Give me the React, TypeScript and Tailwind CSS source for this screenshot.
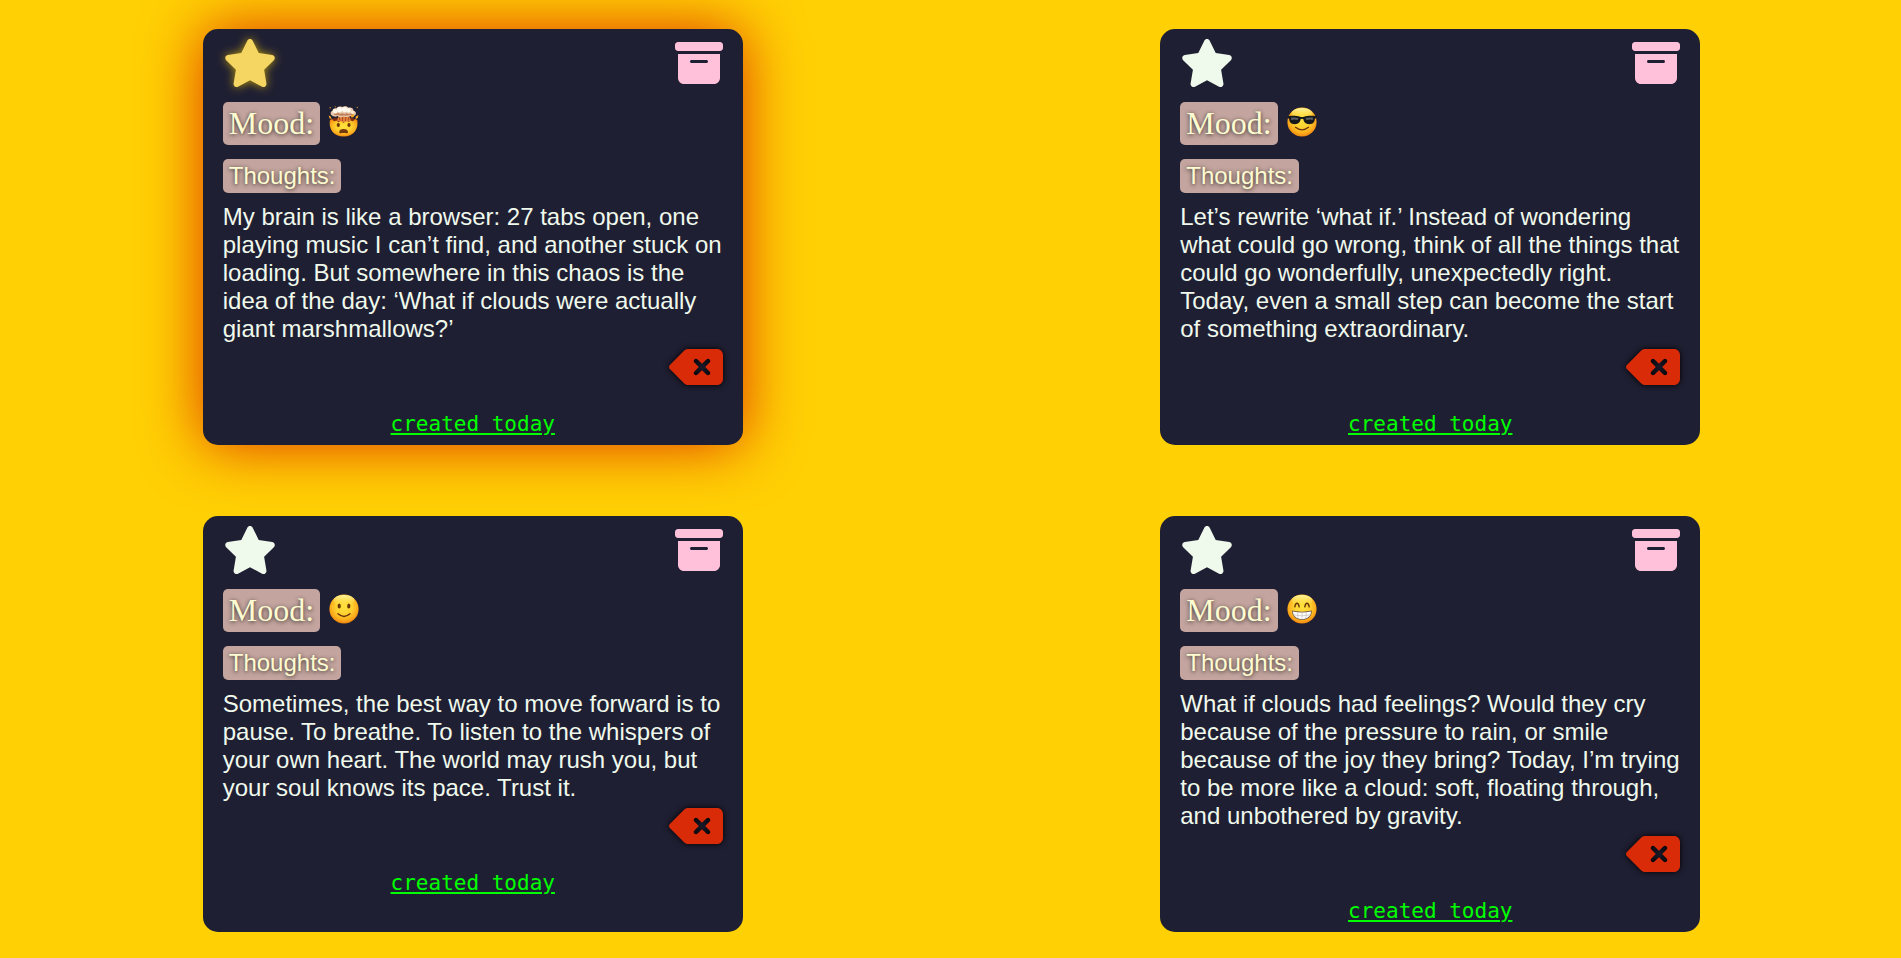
import { useId } from "react";
import { FaBoxArchive, FaDeleteLeft, FaStar } from "react-icons/fa6";

type MoodName = "exploding head" | "sunglasses" | "slight smile" | "beaming";

interface Note {
  id: number;
  mood: MoodName;
  text: string;
  starred: boolean;
}

const notes: Note[] = [
  {
    id: 1,
    mood: "exploding head",
    starred: true,
    text: "My brain is like a browser: 27 tabs open, one playing music I can’t find, and another stuck on loading. But somewhere in this chaos is the idea of the day: ‘What if clouds were actually giant marshmallows?’",
  },
  {
    id: 2,
    mood: "sunglasses",
    starred: false,
    text: "Let’s rewrite ‘what if.’ Instead of wondering what could go wrong, think of all the things that could go wonderfully, unexpectedly right. Today, even a small step can become the start of something extraordinary.",
  },
  {
    id: 3,
    mood: "slight smile",
    starred: false,
    text: "Sometimes, the best way to move forward is to pause. To breathe. To listen to the whispers of your own heart. The world may rush you, but your soul knows its pace. Trust it.",
  },
  {
    id: 4,
    mood: "beaming",
    starred: false,
    text: "What if clouds had feelings? Would they cry because of the pressure to rain, or smile because of the joy they bring? Today, I’m trying to be more like a cloud: soft, floating through, and unbothered by gravity.",
  },
];

function ExplodingFace({ fill }: { fill: string }) {
  return (
    <>
      <path d="M3 14.500 L6 12 H25 L28.500 14.500 L26 17 H5Z" fill="#7d2a10" />
      <path d="M9 14.500 L11 9 H21 L23 14.500 L20 16 H12Z" fill="#e0823c" />
      <path d="M11 10 L12 14.500 M14.500 10 V15 M18 10 L17.500 15 M21 10 L20.500 14.500" stroke="#a9401a" strokeWidth="0.900" />
      <path
        d="M1.900 14 L4.200 13 L6 15.200 L8.500 14.400 L10.500 16.300 L13 15.300 L15.500 16.800 L18 15.300 L20.500 16.300 L22.500 14.400 L25 15.200 L27 13 L29.300 14 C30.800 23 25.500 30.600 15.600 30.600 C5.700 30.600 .4 23 1.900 14Z"
        fill={fill}
      />
      <path d="M4 9.500 C2 8.500 2.200 5.500 4.400 5 C4.400 2.800 6.500 1.700 8.400 2.300 C9.800 .3 12.500 0 14.200 .9 C16.500 -.4 19.500 0 20.600 1.700 C23.200 1 25.500 2.500 25.400 4.700 C28 5 28.800 8 27 9.300 C25.500 10.800 23 10.500 21.800 9.900 C20 11.500 17.500 11.300 15.800 10.500 C14 11.700 11 11.500 9.700 10 C8 11 5.300 10.900 4 9.500Z" fill="#e9c9ab" />
      <path d="M5.500 8 Q6.500 6.500 8.200 7.800 Q10 6.200 12 8 Q14.500 6.300 16.500 8 Q19 6.300 21 8 Q23.500 6.500 26 8 Q25 9.800 22 9 Q19 10.500 16 9.300 Q12.500 10.500 10 9 Q7 9.800 5.500 8Z" fill="#bd7f5c" />
      <circle cx="7" cy="5.200" r="2.300" fill="#fff6ea" />
      <circle cx="11.500" cy="3.600" r="2.700" fill="#fffaf2" />
      <circle cx="16.600" cy="3.500" r="2.700" fill="#fff8ee" />
      <circle cx="20.600" cy="4.300" r="2.300" fill="#fff6ea" />
      <circle cx="24.500" cy="6.300" r="1.700" fill="#fbe9d6" />
      <path
        d="M1 2 L2.600 1 L3 2.600Z M28.300 1.200 L29.800 .7 L29.600 2.200Z M.6 9.500 L2.800 10.500 L3.600 13 L1.600 12.600Z M27.500 10.800 L30.300 9 L30 11.800 L27.800 13.200Z M22.800 9.500 L25.600 8 L26 10.800 L23.500 11.800Z M6.500 .6 L7.700 .2 L7.200 1.700Z"
        fill="#f6a428"
      />
      <ellipse cx="10.300" cy="19" rx="1.600" ry="2" fill="#6b3508" />
      <ellipse cx="21" cy="19" rx="1.600" ry="2" fill="#6b3508" />
      <path d="M11.200 26.200 C11.200 23.800 13 23 15.600 23 C18.200 23 20 23.800 20 26.200 C20 27.700 17.800 27 15.600 27 C13.400 27 11.200 27.700 11.200 26.200Z" fill="#74390c" />
    </>
  );
}

function MoodFace({ mood }: { mood: MoodName }) {
  const id = useId();
  const body = `${id}-body`;
  const shine = `${id}-shine`;
  const fill = `url(#${body})`;
  return (
    <svg viewBox="0 0 32 32" role="img" aria-label={mood} className="mt-1 size-8 shrink-0">
      <defs>
        <radialGradient id={body} cx="50%" cy="42%" r="58%">
          <stop offset="0" stopColor="#ffe23f" />
          <stop offset="0.5" stopColor="#ffcf2e" />
          <stop offset="0.8" stopColor="#fcac1c" />
          <stop offset="1" stopColor="#ee8410" />
        </radialGradient>
        <linearGradient id={shine} x1="0" y1="0" x2="0" y2="1">
          <stop offset="0" stopColor="#fffbb0" stopOpacity="0.95" />
          <stop offset="1" stopColor="#ffe23f" stopOpacity="0" />
        </linearGradient>
      </defs>
      {mood === "exploding head" ? (
        <ExplodingFace fill={fill} />
      ) : (
        <>
          <circle cx="16" cy="16" r="14.600" fill={fill} />
          <ellipse cx="16" cy="7.500" rx="10.500" ry="5.600" fill={`url(#${shine})`} />
        </>
      )}
      {mood === "sunglasses" && (
        <>
          <path
            d="M1.800 10.300 C6 9.500 11 9.800 14 10.800 Q16 11.400 18 10.800 C21 9.800 26 9.500 30.200 10.300 L30 12.200 L28.900 12.800 C28.600 16.500 27 18.200 23.300 18.200 C19.300 18.200 18 16 17.300 13.300 Q16 12.200 14.700 13.300 C14 16 12.700 18.200 8.700 18.200 C5 18.200 3.400 16.500 3.100 12.800 L2 12.200Z"
            fill="#17181c"
          />
          <path d="M5 11.600 Q8.500 11 12.500 12 L11.500 14 Q8 13 5.200 14Z M19.500 12 Q23.500 11 27 11.600 L26.800 14 Q24 13 20.500 14Z" fill="#5a5e63" />
          <path d="M9.500 21.300 Q16 26.500 22.500 21.300" fill="none" stroke="#6b350b" strokeWidth="1.300" strokeLinecap="round" />
        </>
      )}
      {mood === "slight smile" && (
        <>
          <ellipse cx="11.200" cy="13" rx="1.600" ry="2.500" fill="#66350a" />
          <ellipse cx="20.800" cy="13" rx="1.600" ry="2.500" fill="#66350a" />
          <path d="M10 20.800 Q16 26.200 22 20.800" fill="none" stroke="#6b350b" strokeWidth="1.400" strokeLinecap="round" />
        </>
      )}
      {mood === "beaming" && (
        <>
          <path
            d="M8.800 13.800 Q9.500 10.200 11 10.200 T13.200 13.800 M18.800 13.800 Q19.500 10.200 21 10.200 T23.200 13.800"
            fill="none"
            stroke="#66350a"
            strokeWidth="1.400"
            strokeLinecap="round"
          />
          <path d="M6.200 17.600 Q16 19.800 25.800 17.600 C26.200 23.500 21.800 27 16 27 C10.200 27 5.800 23.500 6.200 17.600Z" fill="#6e5a48" />
          <path d="M7 18.600 Q16 20.600 25 18.600 C25 23.300 21 26.200 16 26.200 C11 26.200 7 23.300 7 18.600Z" fill="#fff" />
          <path d="M7.500 21.800 Q16 24 24.500 21.800 M11.500 19.400 L12.200 25.300 M16 19.800 V26 M20.500 19.400 L19.800 25.300" fill="none" stroke="#b9b0a6" strokeWidth="0.600" />
        </>
      )}
    </svg>
  );
}

function NoteCard({ note }: { note: Note }) {
  return (
    <article
      className={`w-full max-w-[540px] rounded-[15px] bg-[#1f1f33] px-5 pt-2.5 pb-2 text-[#eff9ec] ${
        note.starred ? "shadow-[0_0_60px_#de3400]" : ""
      }`}
    >
      <header className="flex items-start justify-between">
        <button type="button" aria-label="Favourite" aria-pressed={note.starred} className="block">
          <FaStar
            className={`h-12 w-[54px] ${note.starred ? "text-[#f6d662] drop-shadow-[0_0_5px_#ffd000b0]" : ""}`}
          />
        </button>
        <button type="button" aria-label="Archive" className="block text-[#ffc0da]">
          <FaBoxArchive className="size-12" />
        </button>
      </header>

      <div className="mt-[15px] flex items-start gap-2">
        <h2 className="rounded-[5px] bg-[#c3a49e] px-1.5 py-[3px] font-['Liberation_Serif',serif] text-[32px] leading-[37px] text-[#fdfbd0] [text-shadow:0_1px_4px_#000000c0]">
          Mood:
        </h2>
        <MoodFace mood={note.mood} />
      </div>

      <h3 className="mt-3.5 w-fit rounded-[5px] bg-[#c3a49e] px-1.5 py-[3px] text-2xl leading-7 text-[#fdfbd0] [text-shadow:0_1px_4px_#000000c0]">
        Thoughts:
      </h3>
      <p className="mt-2.5 text-2xl leading-7">{note.text}</p>

      <div className="flex justify-end">
        <button type="button" aria-label="Delete" className="block text-[#d92b08] drop-shadow-[0_0_3px_#000000]">
          <FaDeleteLeft className="h-12 w-[54px]" />
        </button>
      </div>

      <p className="mt-5 text-center font-['DejaVu_Sans_Mono',monospace] text-[21px] leading-[26px] text-[#00ff00] underline">
        created today
      </p>
    </article>
  );
}

export default function App() {
  return (
    <main className="grid min-h-screen grid-cols-2 content-start justify-items-center gap-x-4 gap-y-[71px] bg-[#ffd004] pt-[29px] pb-6 pl-0.5 font-['Liberation_Sans',Arial,sans-serif]">
      {notes.map((note) => (
        <NoteCard key={note.id} note={note} />
      ))}
    </main>
  );
}
